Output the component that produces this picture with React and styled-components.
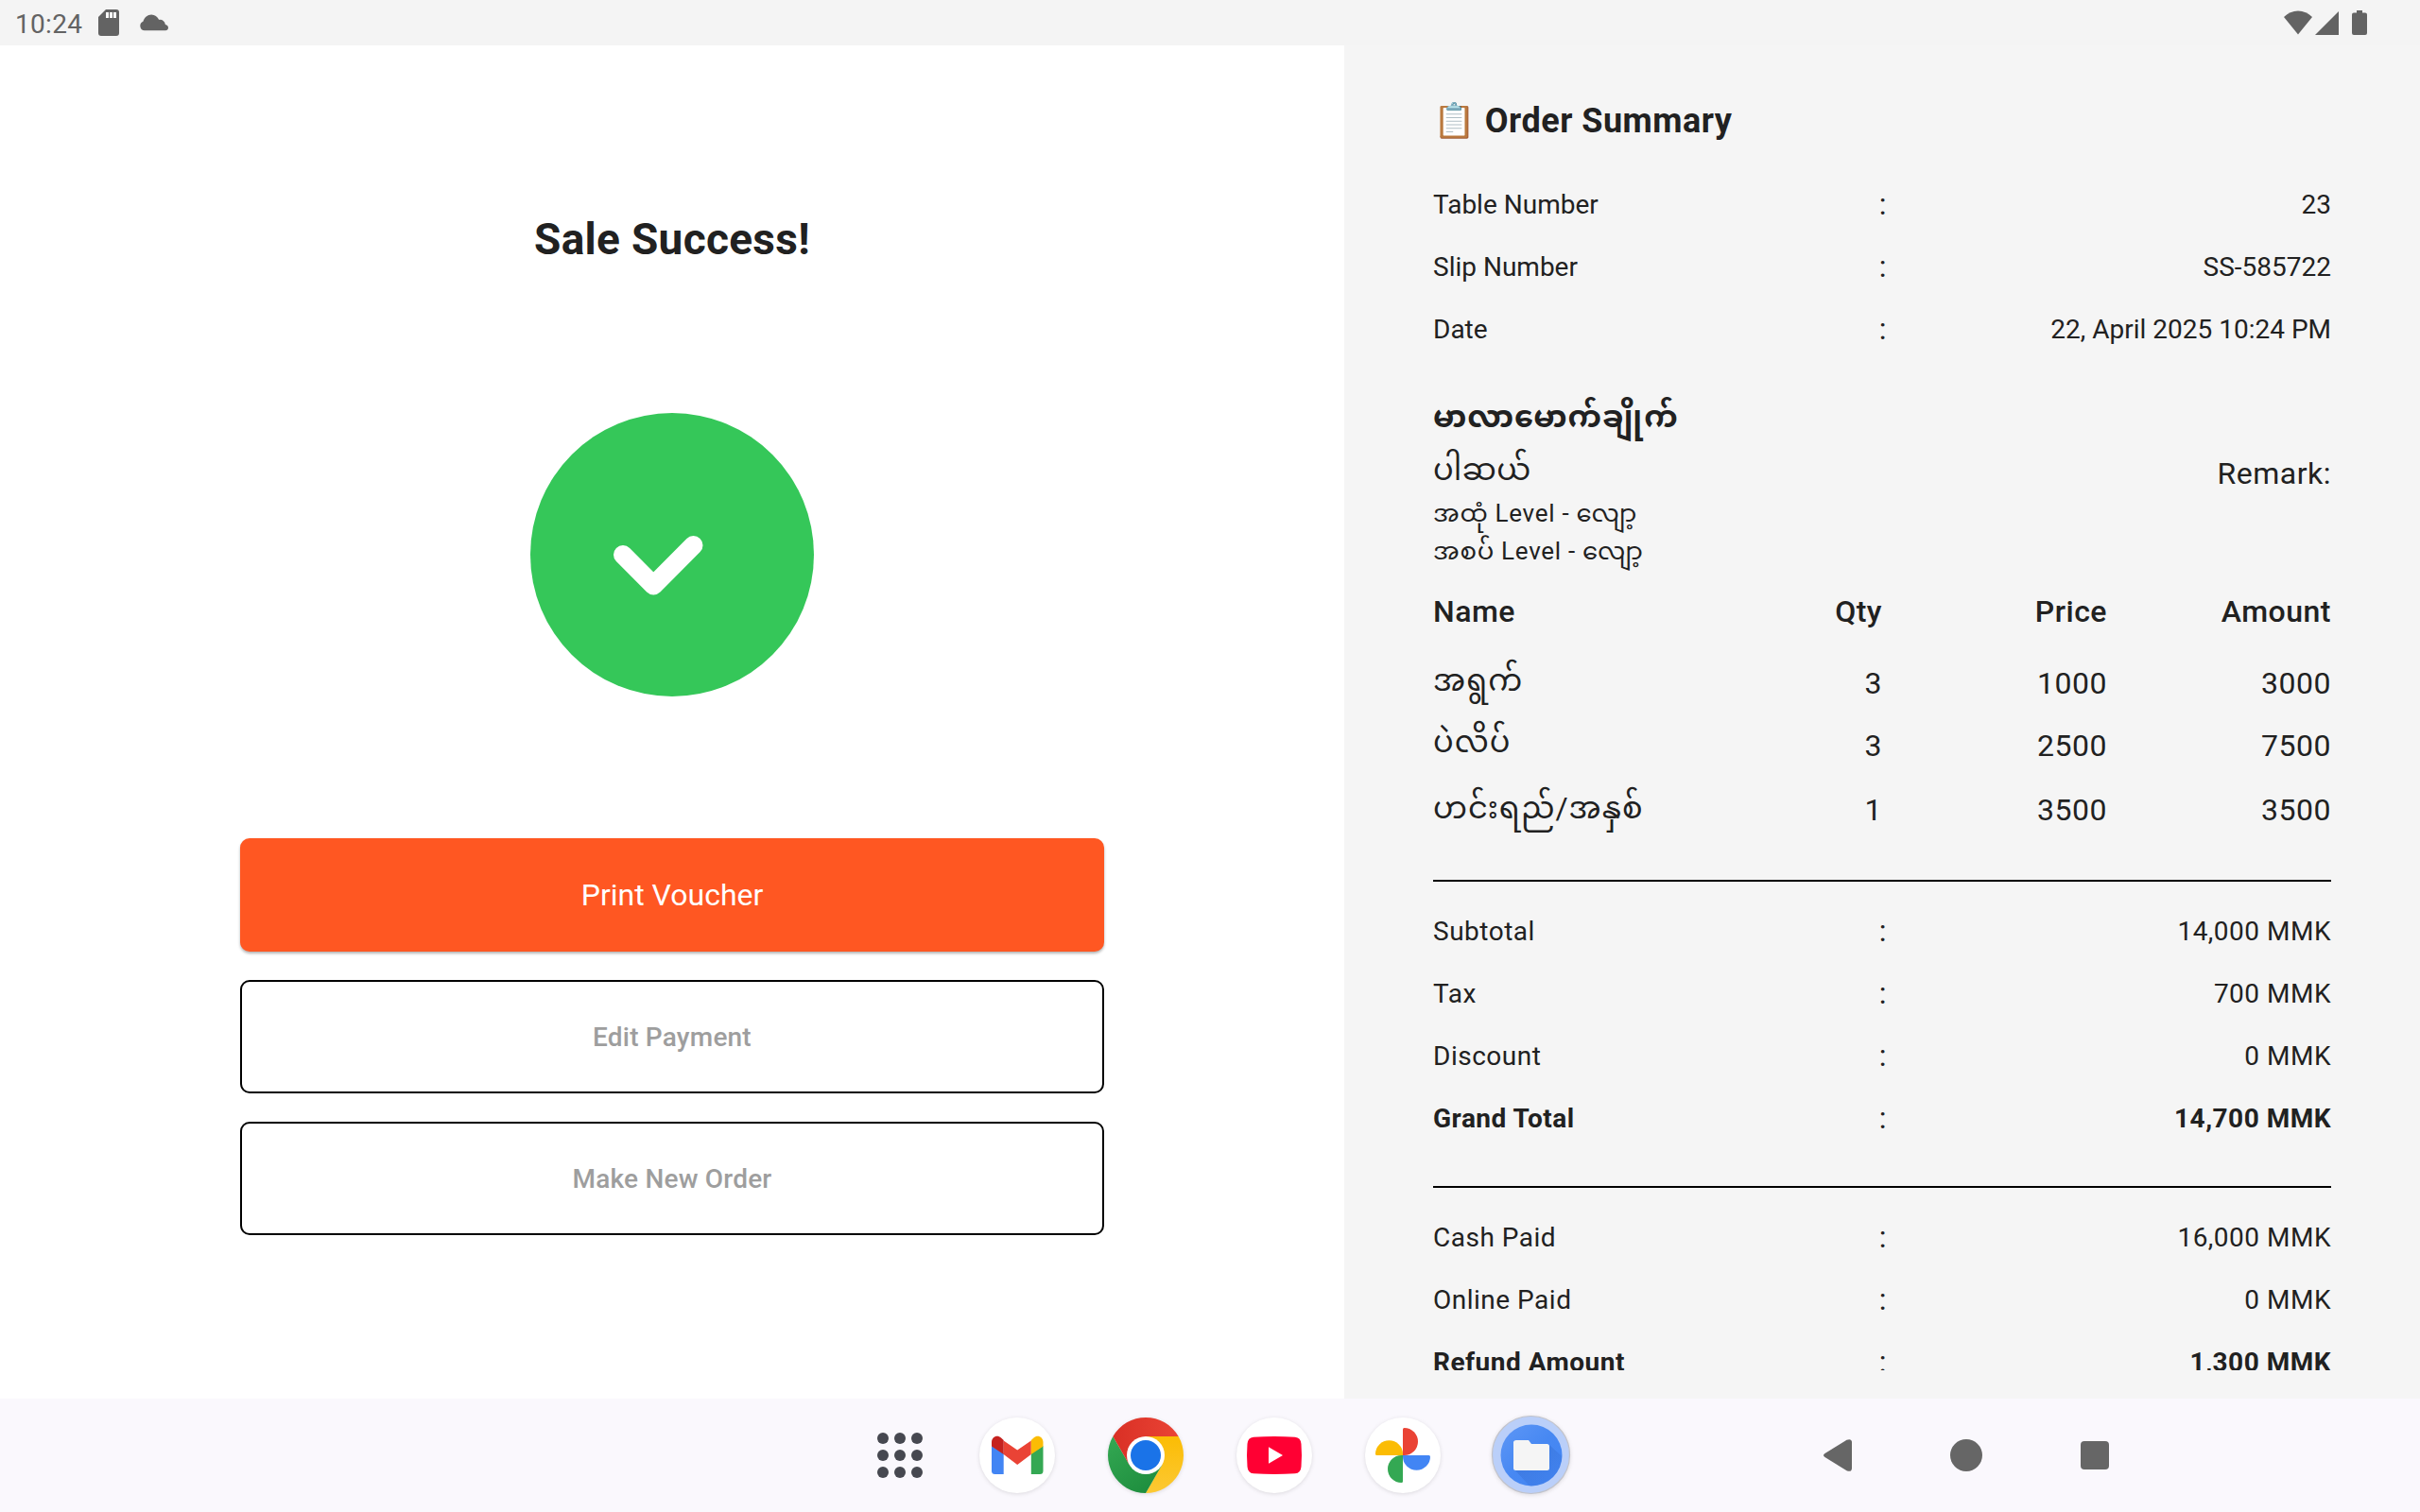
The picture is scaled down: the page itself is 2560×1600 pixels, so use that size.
import React from "react";
import styled, { createGlobalStyle } from "styled-components";

const GlobalStyle = createGlobalStyle`
  *, *::before, *::after { box-sizing: border-box; }
  html, body { margin: 0; padding: 0; }
  body {
    font-family: Roboto, "Noto Sans Myanmar", "Noto Sans", "Noto Color Emoji", sans-serif;
    color: #212121;
    background: #fff;
    overflow: hidden;
  }
`;

const Screen = styled.div`
  width: 2560px;
  height: 1600px;
  display: flex;
  flex-direction: column;
  overflow: hidden;
`;

const StatusBar = styled.header`
  height: 48px;
  flex: none;
  display: flex;
  align-items: center;
  justify-content: space-between;
  padding: 0 56px 0 16px;
  background: #f4f4f4;
  color: #636363;
`;

const StatusGroup = styled.div`
  display: flex;
  align-items: center;
`;

const Clock = styled.span`
  font-size: 28px;
  line-height: 46px;
  width: 88px;
  padding-top: 4px;
  letter-spacing: 0.3px;
`;

const Icon = styled.svg`
  display: block;
  flex: none;
  margin-left: ${(p) => p.$gap || 0}px;
`;

const Main = styled.main`
  flex: 1;
  min-height: 0;
  display: flex;
`;

const SalePanel = styled.section`
  width: 1422px;
  flex: none;
  display: flex;
  flex-direction: column;
  align-items: center;
  padding: 176px 254px 0;
  background: #fff;
`;

const SaleTitle = styled.h1`
  margin: 0;
  font-size: 46px;
  line-height: 58px;
  font-weight: 700;
  letter-spacing: 0.3px;
  white-space: nowrap;
`;

const SuccessBadge = styled.div`
  width: 300px;
  height: 300px;
  margin: 155px 0 150px;
  border-radius: 50%;
  background: #35c759;
  flex: none;
`;

const Actions = styled.div`
  width: 100%;
  display: flex;
  flex-direction: column;
  gap: 30px;
`;

const Button = styled.button`
  width: 100%;
  height: 120px;
  padding: 0;
  border-radius: 10px;
  font-family: inherit;
  border: ${(p) => (p.$primary ? "none" : "2px solid #000")};
  background: ${(p) => (p.$primary ? "#ff5722" : "#fff")};
  color: ${(p) => (p.$primary ? "#fff" : "#9e9e9e")};
  font-size: ${(p) => (p.$primary ? 32 : 28)}px;
  font-weight: ${(p) => (p.$primary ? 400 : 500)};
  letter-spacing: ${(p) => (p.$primary ? 0 : 0.2)}px;
  box-shadow: ${(p) => (p.$primary ? "0 2px 3px rgba(0,0,0,.3)" : "none")};
`;

const SummaryPanel = styled.section`
  flex: 1;
  min-width: 0;
  padding: 55px 94px 30px;
  background: #f5f5f5;
`;

const SummaryScroll = styled.div`
  height: 100%;
  overflow: hidden;
`;

const SummaryTitle = styled.h2`
  margin: 0;
  height: 50px;
  display: flex;
  align-items: center;
  font-size: 36px;
  line-height: 50px;
  font-weight: 700;
  letter-spacing: 0.5px;
  white-space: pre;
`;

const InfoList = styled.div`
  padding-top: ${(p) => p.$top}px;
`;

const InfoRow = styled.div`
  display: grid;
  grid-template-columns: 1fr 20px 1fr;
  align-items: center;
  height: 66px;
  font-size: 28px;
  font-weight: ${(p) => (p.$bold ? 700 : 400)};
  letter-spacing: ${(p) => p.$tracking}px;
  white-space: nowrap;
`;

const Colon = styled.span`
  padding-left: 1px;
  font-size: 32px;
  font-weight: 400;
  letter-spacing: 0;
  text-align: center;
`;

const Value = styled.span`
  text-align: right;
`;

const Order = styled.div`
  display: flex;
  justify-content: space-between;
  height: 196px;
  margin-top: 37px;
`;

const OrderLines = styled.div`
  display: flex;
  flex-direction: column;
`;

const DishName = styled.div`
  height: 46px;
  line-height: 46px;
  font-size: 32px;
  font-weight: 700;
  letter-spacing: 1px;
  white-space: nowrap;
`;

const DishBase = styled.div`
  height: 59px;
  line-height: 66px;
  font-size: 32px;
  letter-spacing: 0.5px;
  white-space: nowrap;
`;

const DishLevel = styled.div`
  height: 40px;
  line-height: 40px;
  font-size: 26px;
  letter-spacing: 0.7px;
  white-space: nowrap;
`;

const Remark = styled.div`
  padding-top: 63px;
  font-size: 32px;
  line-height: 40px;
  letter-spacing: 0.5px;
`;

const ItemRow = styled.div`
  display: grid;
  grid-template-columns: 1fr 75px 238px 237px;
  align-items: center;
  height: ${(p) => p.$height || 66}px;
  margin-bottom: ${(p) => (p.$head ? 10 : 0)}px;
  font-size: 32px;
  line-height: 40px;
  font-weight: ${(p) => (p.$head ? 500 : 400)};
  letter-spacing: 0.5px;
  white-space: nowrap;

  & > * + * { text-align: right; }
`;

const ItemName = styled.span`
  height: ${(p) => 40 + p.$lift}px;
  line-height: 40px;
  letter-spacing: 1px;
`;

const Divider = styled.hr`
  height: 2px;
  margin: ${(p) => p.$top}px 0 0;
  border: 0;
  background: #000;
`;

const TaskBar = styled.footer`
  height: 120px;
  flex: none;
  display: grid;
  grid-template-columns: 1fr auto 1fr;
  align-items: center;
  background: #faf8fd;
`;

const Dock = styled.nav`
  grid-column: 2;
  display: flex;
  align-items: center;
  gap: 48px;
  margin-left: 24px;
`;

const NavKeys = styled.nav`
  display: flex;
  justify-content: flex-end;
  gap: 88px;
  padding-right: 320px;
`;

const AppIcon = styled.svg`
  display: block;
  width: ${(p) => (p.$flat ? 64 : 88)}px;
  height: 88px;
  overflow: visible;
  filter: ${(p) => (p.$flat ? "none" : "drop-shadow(0 1px 2px rgba(0,0,0,.12))")};
`;

const META = [
  ["Table Number", "23"],
  ["Slip Number", "SS-585722"],
  ["Date", "22, April 2025 10:24 PM"],
];

const TOTALS = [
  ["Subtotal", "14,000 MMK"],
  ["Tax", "700 MMK"],
  ["Discount", "0 MMK"],
  ["Grand Total", "14,700 MMK", true],
];

const PAID = [
  ["Cash Paid", "16,000 MMK"],
  ["Online Paid", "0 MMK"],
  ["Refund Amount", "1,300 MMK", true],
];

const ITEMS = [
  { name: "အရွက်", qty: "3", price: "1000", amount: "3000", height: 66, lift: 7 },
  { name: "ပဲလိပ်", qty: "3", price: "2500", amount: "7500", height: 66, lift: 8 },
  { name: "ဟင်းရည်/အနှစ်", qty: "1", price: "3500", amount: "3500", height: 70, lift: 4 },
];

function Info({ rows, top, tracking = 0.5 }) {
  return (
    <InfoList $top={top}>
      {rows.map(([label, value, bold]) => (
        <InfoRow key={label} $bold={bold} $tracking={tracking}>
          <span>{label}</span>
          <Colon>:</Colon>
          <Value>{value}</Value>
        </InfoRow>
      ))}
    </InfoList>
  );
}

function Status() {
  return (
    <StatusBar>
      <StatusGroup>
        <Clock>10:24</Clock>
        <Icon width="22" height="28" viewBox="0 0 22 28">
          <path d="M8 0H19Q22 0 22 3V25Q22 28 19 28H3Q0 28 0 25V8Z" fill="#636363" />
          <path d="M8 3h3v6H8zM12 3h3v6h-3zM16 3h3v6h-3z" fill="#fff" />
        </Icon>
        <Icon $gap={22} width="30" height="18" viewBox="0 0 30 18">
          <path d="M5 17.3A5 5 0 0 1 3.4 7.7C4.8 3.4 8 .4 12.200 .4C15.700 .4 18.600 2.500 20.200 5.900C23.700 5.500 26.400 7.600 26.900 11C28.900 11.400 30 12.700 30 14.300C30 16 28.700 17.300 27 17.300Z" fill="#636363" />
        </Icon>
      </StatusGroup>
      <StatusGroup>
        <Icon width="30" height="26" viewBox="0 0 30 26">
          <path d="M0 7Q6.500 .5 15 .5T30 7L15 25.500Z" fill="#636363" />
        </Icon>
        <Icon $gap={3} width="25" height="25" viewBox="0 0 25 25">
          <path d="M25 0V25H0Z" fill="#636363" />
        </Icon>
        <Icon $gap={14} width="16" height="26" viewBox="0 0 16 26">
          <path d="M5 0h6v2.500h3q2 0 2 2V24q0 2-2 2H2q-2 0-2-2V4.500q0-2 2-2h3z" fill="#636363" />
        </Icon>
      </StatusGroup>
    </StatusBar>
  );
}

function Taskbar() {
  return (
    <TaskBar>
      <Dock>
        <AppIcon $flat viewBox="-32 -44 64 88">
          {[-18, 0, 18].map((y) =>
            [-18, 0, 18].map((x) => <circle key={`${x},${y}`} cx={x} cy={y} r="6" fill="#464850" />)
          )}
        </AppIcon>
        <AppIcon viewBox="-44 -44 88 88">
          <circle r="40" fill="#fff" />
          <path d="M-27-10V16.500Q-27 20-23.500 20H-14.300V-2Z" fill="#4285f4" />
          <path d="M27.500-10V16.500Q27.500 20 24 20H14.800V-2Z" fill="#34a853" />
          <path d="M-14.300-15.500L.2-5.500 14.800-15.500V-1L.2 10-14.300-1Z" fill="#ea4335" />
          <path d="M-14.300-16L-17-18.500C-21-22.500-27-19.500-27-14V-9.600L-14.300-1Z" fill="#c5221f" />
          <path d="M14.800-16L17.500-18.500C21.500-22.500 27.500-19.500 27.500-14V-9.600L14.800-1Z" fill="#fbbc04" />
        </AppIcon>
        <AppIcon viewBox="-44 -44 88 88">
          <defs>
            <linearGradient id="chromeRed" x1="0" x2="1"><stop stopColor="#d93025" /><stop offset="1" stopColor="#ea4335" /></linearGradient>
            <linearGradient id="chromeGreen" x1="0" x2=".7" y2="1"><stop stopColor="#34a853" /><stop offset="1" stopColor="#1e8e3e" /></linearGradient>
            <linearGradient id="chromeYellow" x1="0" x2="0" y1="1" y2="0"><stop stopColor="#fcc934" /><stop offset="1" stopColor="#fbbc04" /></linearGradient>
          </defs>
          <path d="M0-20H34.640A40 40 0 0 1 0 40L17.320 10Z" fill="url(#chromeYellow)" />
          <path d="M17.320 10L0 40A40 40 0 0 1-34.640-20L-17.320 10Z" fill="url(#chromeGreen)" />
          <path d="M-17.320 10L-34.640-20A40 40 0 0 1 34.640-20H0Z" fill="url(#chromeRed)" />
          <circle r="20" fill="#fff" />
          <circle r="16" fill="#1a73e8" />
        </AppIcon>
        <AppIcon viewBox="-44 -44 88 88">
          <circle r="40" fill="#fff" />
          <path d="M-22-19.300Q0-20.700 22-19.300Q28-18.800 28.500-12Q29.500 0 28.500 12Q28 18.800 22 19.300Q0 20.700-22 19.300Q-28 18.800-28.500 12Q-29.500 0-28.500-12Q-28-18.800-22-19.300Z" fill="#ff0033" />
          <path d="M-6-8.700L9 0-6 8.700Z" fill="#fff" />
        </AppIcon>
        <AppIcon viewBox="-44 -44 88 88">
          <circle r="40" fill="#fff" />
          <path d="M0 0V-27.500Q0-29 1.500-29A14.250 14.250 0 0 1 1.500 0Z" fill="#ea4335" />
          <path d="M0 0H27.500Q29 0 29 1.500A14.500 14.250 0 0 1 0 1.500Z" fill="#4285f4" />
          <path d="M0 0V27.500Q0 29-1.500 29A14.250 14.250 0 0 1-1.500 0Z" fill="#34a853" />
          <path d="M0 0H-27.500Q-29 0-29-1.500A14.500 14.250 0 0 1 0-1.500Z" fill="#fbbc04" />
        </AppIcon>
        <AppIcon viewBox="-44 -44 88 88">
          <defs>
            <linearGradient id="filesBlue" x2="1" y2="1"><stop stopColor="#5e97f6" /><stop offset=".5" stopColor="#4788f2" /><stop offset="1" stopColor="#4285f4" /></linearGradient>
            <linearGradient id="filesShade" x2="1" y2="1"><stop stopColor="#2f66c9" stopOpacity=".5" /><stop offset="1" stopColor="#2f66c9" stopOpacity="0" /></linearGradient>
            <clipPath id="filesClip"><circle r="32.500" /></clipPath>
          </defs>
          <circle cx="-.5" cy="-.5" r="41" fill="#bacff9" stroke="#c2c3ca" strokeWidth="1.200" />
          <circle r="32.500" fill="url(#filesBlue)" />
          <path d="M19-11L40 8V40H5L-18 15Z" fill="url(#filesShade)" clipPath="url(#filesClip)" />
          <path d="M-16-16H-3L0-12H16.500Q19-12 19-9.500V13.500Q19 16 16.500 16H-16.500Q-19 16-19 13.500V-13.500Q-19-16-16-16Z" fill="#f5f5f5" />
        </AppIcon>
      </Dock>
      <NavKeys>
        <Icon width="48" height="48" viewBox="-24 -24 48 48">
          <path d="M-13.500-1.900L9.500-16.200Q14.500-18.200 15-14V14Q14.500 18.200 9.500 16.200L-13.500 1.900Q-16.500 0-13.500-1.900Z" fill="#666" />
        </Icon>
        <Icon width="48" height="48" viewBox="-24 -24 48 48">
          <circle r="17" fill="#666" />
        </Icon>
        <Icon width="48" height="48" viewBox="-24 -24 48 48">
          <rect x="-15" y="-15" width="30" height="30" rx="4" fill="#666" />
        </Icon>
      </NavKeys>
    </TaskBar>
  );
}

export default function App() {
  return (
    <Screen>
      <GlobalStyle />
      <Status />
      <Main>
        <SalePanel>
          <SaleTitle>Sale Success!</SaleTitle>
          <SuccessBadge>
            <Icon width="300" height="300" viewBox="0 0 300 300">
              <path d="M98 150L130.300 182.500L172.500 140" fill="none" stroke="#fff" strokeWidth="20" strokeLinecap="round" strokeLinejoin="round" />
            </Icon>
          </SuccessBadge>
          <Actions>
            <Button $primary>Print Voucher</Button>
            <Button>Edit Payment</Button>
            <Button>Make New Order</Button>
          </Actions>
        </SalePanel>
        <SummaryPanel>
          <SummaryScroll>
            <SummaryTitle>📋 Order Summary</SummaryTitle>
            <Info rows={META} top={30} tracking={0} />
            <Order>
              <OrderLines>
                <DishName>မာလာမောက်ချိုက်</DishName>
                <DishBase>ပါဆယ်</DishBase>
                <DishLevel>အထုံ Level - လျော့</DishLevel>
                <DishLevel>အစပ် Level - လျော့</DishLevel>
              </OrderLines>
              <Remark>Remark:</Remark>
            </Order>
            <ItemRow $head>
              <span>Name</span>
              <span>Qty</span>
              <span>Price</span>
              <span>Amount</span>
            </ItemRow>
            {ITEMS.map((item) => (
              <ItemRow key={item.name} $height={item.height}>
                <ItemName $lift={item.lift}>{item.name}</ItemName>
                <span>{item.qty}</span>
                <span>{item.price}</span>
                <span>{item.amount}</span>
              </ItemRow>
            ))}
            <Divider $top={39} />
            <Info rows={TOTALS} top={19} />
            <Divider $top={39} />
            <Info rows={PAID} top={19} />
          </SummaryScroll>
        </SummaryPanel>
      </Main>
      <Taskbar />
    </Screen>
  );
}
